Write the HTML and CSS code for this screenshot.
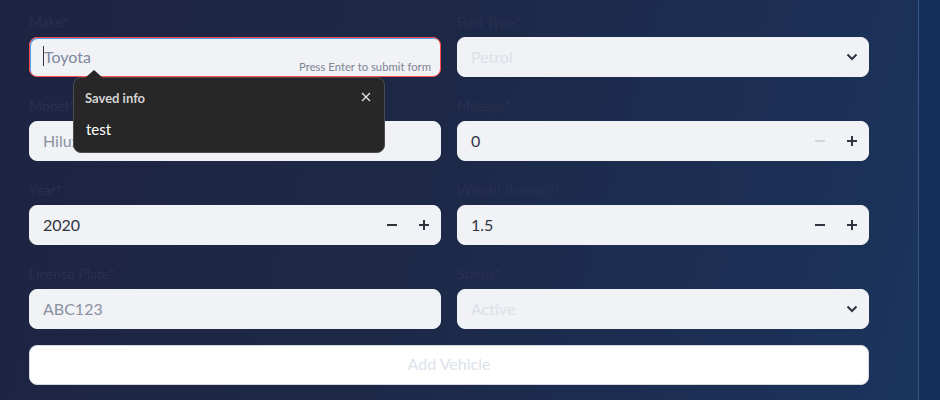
FILE: index.html
```html
<!DOCTYPE html>
<html>
<head>
<meta charset="utf-8">
<link rel="stylesheet" href="styles.css">
</head>
<body>
<div class="app">
  <main class="main">
    <form class="form">
      <div class="field">
        <label class="label">Make*</label>
        <div class="input focused">
          <span class="caret"></span><span class="autofill">Toyota</span>
          <span class="hint">Press Enter to submit form</span>
        </div>
        <div class="popup">
          <span class="arrow"></span>
          <div class="popup-head">
            <span class="popup-title">Saved info</span>
            <svg class="close" width="10" height="10" viewBox="0 0 10 10"><path d="M1 1L9 9M9 1L1 9" stroke="#e8e8e8" stroke-width="1.3" fill="none"/></svg>
          </div>
          <div class="popup-item">test</div>
        </div>
      </div>
      <div class="field">
        <label class="label">Fuel Type*</label>
        <div class="input select">
          <span class="placeholder">Petrol</span>
          <span class="chev"><svg width="12" height="8" viewBox="0 0 12 8"><path d="M1.5 1.5L6 6L10.5 1.5" stroke="#31333f" stroke-width="2" fill="none"/></svg></span>
        </div>
      </div>

      <div class="field">
        <label class="label">Model*</label>
        <div class="input"><span class="muted">Hilux</span></div>
      </div>
      <div class="field">
        <label class="label">Mileage*</label>
        <div class="input number">
          <span class="value">0</span>
          <span class="step disabled"><svg width="10" height="10" viewBox="0 0 10 10"><path d="M0 5H10" stroke="currentColor" stroke-width="2"/></svg></span>
          <span class="step"><svg width="10" height="10" viewBox="0 0 10 10"><path d="M0 5H10M5 0V10" stroke="currentColor" stroke-width="2"/></svg></span>
        </div>
      </div>

      <div class="field">
        <label class="label">Year*</label>
        <div class="input number">
          <span class="value">2020</span>
          <span class="step"><svg width="10" height="10" viewBox="0 0 10 10"><path d="M0 5H10" stroke="currentColor" stroke-width="2"/></svg></span>
          <span class="step"><svg width="10" height="10" viewBox="0 0 10 10"><path d="M0 5H10M5 0V10" stroke="currentColor" stroke-width="2"/></svg></span>
        </div>
      </div>
      <div class="field">
        <label class="label">Weight (tonnes)*</label>
        <div class="input number">
          <span class="value">1.5</span>
          <span class="step"><svg width="10" height="10" viewBox="0 0 10 10"><path d="M0 5H10" stroke="currentColor" stroke-width="2"/></svg></span>
          <span class="step"><svg width="10" height="10" viewBox="0 0 10 10"><path d="M0 5H10M5 0V10" stroke="currentColor" stroke-width="2"/></svg></span>
        </div>
      </div>

      <div class="field">
        <label class="label">License Plate*</label>
        <div class="input"><span class="muted">ABC123</span></div>
      </div>
      <div class="field">
        <label class="label">Status*</label>
        <div class="input select">
          <span class="placeholder">Active</span>
          <span class="chev"><svg width="12" height="8" viewBox="0 0 12 8"><path d="M1.5 1.5L6 6L10.5 1.5" stroke="#31333f" stroke-width="2" fill="none"/></svg></span>
        </div>
      </div>

      <button type="button" class="submit">Add Vehicle</button>
    </form>
  </main>
  <aside class="side"></aside>
</div>
</body>
</html>
```

FILE: styles.css
```css
* { box-sizing: border-box; }
html, body { margin: 0; height: 100%; }
body {
  font-family: Lato, "Noto Sans", sans-serif;
  overflow: hidden;
}
.app {
  display: flex;
  height: 400px;
}
.main {
  width: 918px;
  background: linear-gradient(105deg, #1e2442 0%, #1d2847 45%, #1c2f54 80%, #1b355d 100%);
  padding: 9px 0 0 29px;
}
.side {
  width: 22px;
  background: #14305a;
  border-left: 1px solid #3a5683;
}
.form {
  display: grid;
  grid-template-columns: 412px 412px;
  column-gap: 16px;
  row-gap: 16px;
}
.field {
  position: relative;
}
.label {
  display: flex;
  align-items: center;
  height: 24px;
  margin-bottom: 4px;
  font-size: 14px;
  color: #293050;
}
.input {
  position: relative;
  height: 40px;
  background: #f0f2f6;
  border-radius: 8px;
  border: 1px solid #f0f2f6;
  display: flex;
  align-items: center;
  padding: 0 13px 2px;
  font-size: 16px;
  color: #31333f;
}
.input.focused {
  border: 1px solid #ff4b4b;
  box-shadow: inset 1px 1px 0 #4e9fe6;
}
.caret {
  display: inline-block;
  width: 1px;
  height: 20px;
  background: #31333f;
}
.autofill { color: #7d879e; }
.hint {
  position: absolute;
  right: 9px;
  bottom: 3px;
  font-size: 11.3px;
  color: #808495;
}
.muted { color: #8b90a0; }
.placeholder { color: #dde0e7; flex: 1; }
.select { padding-right: 0; }
.chev {
  width: 34px;
  height: 38px;
  display: flex;
  align-items: center;
  justify-content: center;
  border-left: 1px solid #eceef3;
  margin-top: 2px;
}
.number { padding-right: 0; }
.value { flex: 1; }
.step {
  width: 32px;
  height: 38px;
  display: flex;
  align-items: center;
  justify-content: center;
  color: #31333f;
  margin-top: 2px;
}
.step.disabled { color: #d3d7df; }
.popup {
  position: absolute;
  left: 44px;
  top: 68px;
  width: 312px;
  height: 76px;
  background: #272727;
  border: 1px solid #4d4d4d;
  border-radius: 8px;
  z-index: 5;
  padding: 0 11px;
}
.arrow {
  position: absolute;
  left: 11px;
  top: -8px;
  width: 0;
  height: 0;
  border-left: 9px solid transparent;
  border-right: 9px solid transparent;
  border-bottom: 8px solid #272727;
}
.popup-head {
  display: flex;
  justify-content: space-between;
  align-items: center;
  height: 39px;
  padding-right: 2px;
}
.popup-title {
  font-size: 13px;
  font-weight: bold;
  color: #d4d4d4;
}
.close { margin-top: -2px; }
.popup-item {
  font-size: 15px;
  line-height: 24px;
  color: #ffffff;
  padding-left: 1px;
}
.submit {
  grid-column: 1 / span 2;
  height: 40px;
  background: #ffffff;
  border: 1px solid #d6d8de;
  border-radius: 8px;
  font-family: inherit;
  font-size: 16px;
  color: #dde2ec;
  padding: 0 0 3px;
}
```
